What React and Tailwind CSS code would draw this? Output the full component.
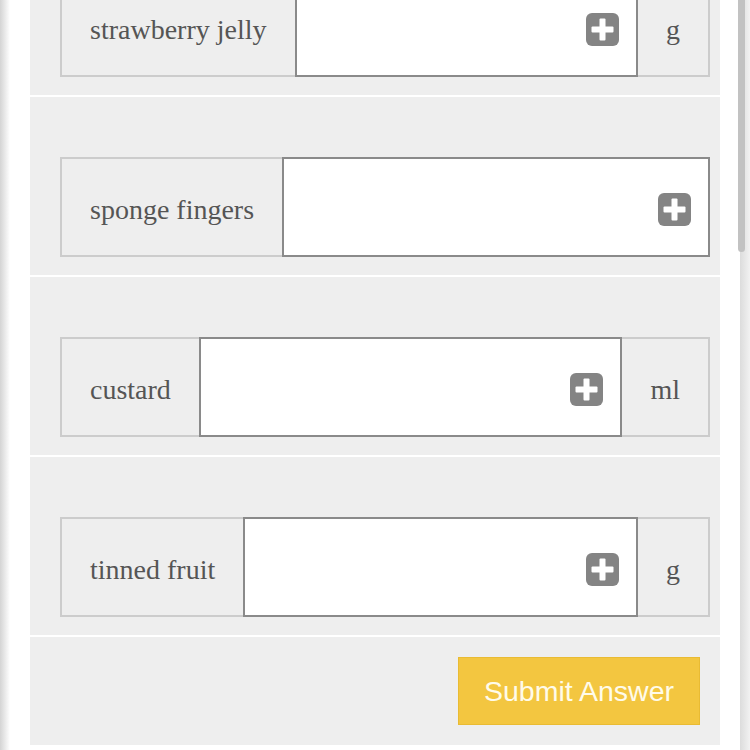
import React from "react";

function PlusIcon() {
  return (
    <svg width="33" height="33" viewBox="0 0 33 33" className="mt-[5px]">
      <rect x="0" y="0" width="33" height="33" rx="6" fill="#848484" />
      <rect x="13.5" y="5.5" width="6" height="22" rx="1" fill="#fff" />
      <rect x="5.5" y="13.5" width="22" height="6" rx="1" fill="#fff" />
    </svg>
  );
}

function Row({ label, unit, first }) {
  return (
    <div
      className={
        "bg-[#eeeeee] pt-[60px] pb-[18px] pl-[30px] pr-[10px]" +
        (first ? " -mt-[83px]" : "")
      }
    >
      <div className="flex h-[100px] items-stretch">
        <div className="flex items-center border-2 border-r-0 border-[#cccccc] bg-[#eeeeee] px-[28px] pt-[6px] text-[28px] text-[#555555] [font-family:'Liberation_Serif',serif] whitespace-nowrap">
          {label}
        </div>
        <div className="flex flex-1 items-center justify-end border-2 border-[#8a8a8a] bg-white pr-[17px]">
          <PlusIcon />
        </div>
        {unit && (
          <div className="flex items-center border-2 border-l-0 border-[#cccccc] bg-[#eeeeee] px-[28px] pt-[6px] text-[28px] text-[#555555] [font-family:'Liberation_Serif',serif]">
            {unit}
          </div>
        )}
      </div>
    </div>
  );
}

export default function App() {
  return (
    <div className="relative flex h-[750px] w-[750px] overflow-hidden bg-white">
      <div className="h-full w-[10px] bg-gradient-to-r from-[#d4d4d4] to-white" />
      <div className="flex h-full flex-1 flex-col gap-[2px] pl-[20px] pr-[20px]">
        <Row label="strawberry jelly" unit="g" first />
        <Row label="sponge fingers" />
        <Row label="custard" unit="ml" />
        <Row label="tinned fruit" unit="g" />
        <div className="flex h-[108px] justify-end bg-[#eeeeee] pt-[20px] pr-[20px]">
          <button className="flex h-[68px] w-[242px] items-center justify-center border border-[#e9bb33] bg-[#f3c640] pt-[1px] text-[28.5px] text-[#fffbea] [font-family:'Liberation_Sans',sans-serif]">
            Submit Answer
          </button>
        </div>
      </div>
      <div className="h-full w-[10px] bg-gradient-to-r from-[#dcdcdc] to-[#f2f2f2]" />
      <div className="absolute right-[5px] top-0 h-[252px] w-[7px] rounded-b-[4px] bg-[#c2c2c2]" />
    </div>
  );
}
